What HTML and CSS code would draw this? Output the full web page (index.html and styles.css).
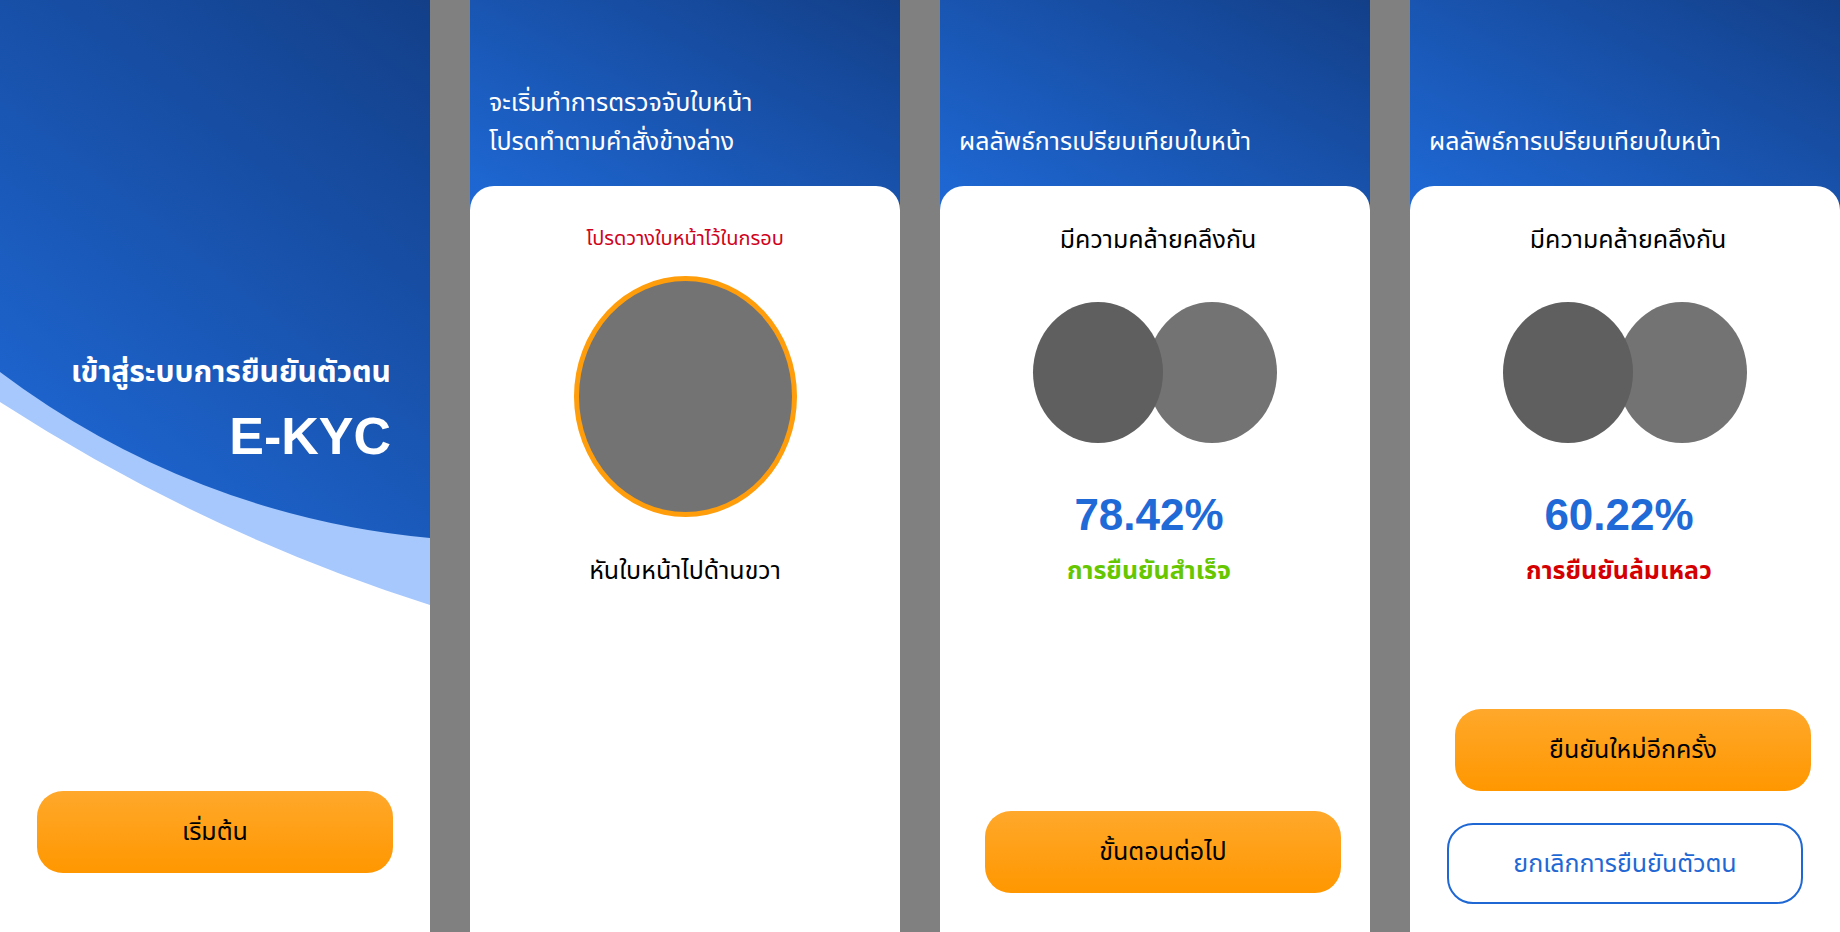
FILE: index.html
```html
<!DOCTYPE html>
<html lang="th">
<head>
<meta charset="utf-8">
<title>E-KYC</title>
<link rel="stylesheet" href="styles.css">
</head>
<body>
<div class="screens">

  <section class="screen screen-welcome">
    <svg class="welcome-bg" viewBox="0 0 430 932" width="430" height="932" aria-hidden="true">
      <defs>
        <linearGradient id="welcomeGrad" gradientUnits="userSpaceOnUse" x1="0" y1="540" x2="430" y2="0">
          <stop offset="0" stop-color="#1f6bdb"/>
          <stop offset="1" stop-color="#133f88"/>
        </linearGradient>
      </defs>
      <path fill="#a6c8fd" d="M0 0H430V605A1800 1800 0 0 1 0 402Z"/>
      <path fill="url(#welcomeGrad)" d="M0 0H430V538A842 842 0 0 1 0 372Z"/>
    </svg>
    <div class="welcome-title">
      <div class="welcome-th">เข้าสู่ระบบการยืนยันตัวตน</div>
      <div class="welcome-en">E-KYC</div>
    </div>
    <button class="btn btn-primary btn-welcome">เริ่มต้น</button>
  </section>

  <section class="screen screen-step">
    <header class="screen-head">
      <p class="head-line">จะเริ่มทำการตรวจจับใบหน้า</p>
      <p class="head-line">โปรดทำตามคำสั่งข้างล่าง</p>
    </header>
    <div class="card">
      <p class="hint-red">โปรดวางใบหน้าไว้ในกรอบ</p>
      <div class="face-frame"></div>
      <p class="instruction">หันใบหน้าไปด้านขวา</p>
    </div>
  </section>

  <section class="screen screen-step">
    <header class="screen-head">
      <p class="head-line">ผลลัพธ์การเปรียบเทียบใบหน้า</p>
    </header>
    <div class="card">
      <p class="similar">มีความคล้ายคลึงกัน</p>
      <div class="faces">
        <div class="face face-a"></div>
        <div class="face face-b"></div>
      </div>
      <p class="score">78.42%</p>
      <p class="status status-ok">การยืนยันสำเร็จ</p>
      <button class="btn btn-primary btn-next">ขั้นตอนต่อไป</button>
    </div>
  </section>

  <section class="screen screen-step">
    <header class="screen-head">
      <p class="head-line">ผลลัพธ์การเปรียบเทียบใบหน้า</p>
    </header>
    <div class="card">
      <p class="similar">มีความคล้ายคลึงกัน</p>
      <div class="faces">
        <div class="face face-a"></div>
        <div class="face face-b"></div>
      </div>
      <p class="score">60.22%</p>
      <p class="status status-fail">การยืนยันล้มเหลว</p>
      <button class="btn btn-primary btn-retry">ยืนยันใหม่อีกครั้ง</button>
      <button class="btn btn-outline">ยกเลิกการยืนยันตัวตน</button>
    </div>
  </section>

</div>
</body>
</html>
```

FILE: styles.css
```css
* { box-sizing: border-box; }

html, body {
  margin: 0;
  padding: 0;
}

body {
  background: #808080;
  font-family: "Noto Sans Thai", "Noto Sans Thai UI", "Noto Sans", "Liberation Sans", sans-serif;
  color: #000;
}

p { margin: 0; }

.screens {
  display: flex;
  gap: 40px;
  width: 1840px;
  height: 932px;
}

.screen {
  position: relative;
  width: 430px;
  height: 932px;
  flex: none;
  overflow: hidden;
  display: flex;
  flex-direction: column;
}

/* ---------- welcome ---------- */
.screen-welcome {
  background: #fff;
}

.welcome-bg {
  position: absolute;
  left: 0;
  top: 0;
  display: block;
}

.welcome-title {
  position: relative;
  padding-top: 352px;
  padding-right: 39px;
  text-align: right;
  color: #fff;
}

.welcome-th {
  font-size: 30px;
  line-height: 42px;
  font-weight: 700;
}

.welcome-en {
  margin-top: 12px;
  font-family: "Liberation Sans", Arial, sans-serif;
  font-size: 52px;
  line-height: 60px;
  font-weight: 700;
}

/* ---------- buttons ---------- */
.btn {
  display: block;
  width: 356px;
  height: 82px;
  border-radius: 26px;
  border: none;
  padding: 0;
  font-family: inherit;
  font-size: 25px;
  cursor: pointer;
}

.btn-primary {
  background: linear-gradient(to bottom, #ffa82b, #ff9700);
  color: #000;
}

.btn-welcome {
  position: relative;
  margin: auto 0 59px 37px;
}

.btn-next {
  margin: auto 0 39px 45px;
}

.btn-retry {
  margin: auto 0 0 45px;
}

.btn-outline {
  margin: 32px 0 28px 37px;
  height: 81px;
  background: #fff;
  border: 2px solid #1f68d4;
  color: #1f68d4;
}

/* ---------- step screens ---------- */
.screen-step {
  background: linear-gradient(to top right, #1f6bda, #133f88) no-repeat;
  background-size: 100% 230px;
  background-color: #fff;
}

.screen-head {
  height: 186px;
  flex: none;
  display: flex;
  flex-direction: column;
  justify-content: flex-end;
  padding: 0 12px 24px 19px;
  color: #fff;
}

.head-line {
  font-size: 25px;
  line-height: 39px;
  white-space: nowrap;
}

.card {
  flex: 1;
  background: #fff;
  border-radius: 24px 24px 0 0;
  display: flex;
  flex-direction: column;
  align-items: center;
}

.hint-red {
  margin-top: 40px;
  font-size: 20px;
  line-height: 26px;
  color: #d0021b;
}

.face-frame {
  margin-top: 24px;
  width: 223px;
  height: 241px;
  border-radius: 50%;
  border: 5px solid #ff9d0a;
  background: #737373;
}

.instruction {
  margin-top: 37px;
  font-size: 25px;
  line-height: 34px;
}

.similar {
  margin-top: 37px;
  margin-left: 6px;
  font-size: 25px;
  line-height: 34px;
}

.faces {
  margin-top: 45px;
  display: flex;
}

.face {
  width: 130px;
  height: 141px;
  border-radius: 50%;
}

.face-a {
  position: relative;
  z-index: 1;
  background: #5f5f5f;
}

.face-b {
  margin-left: -16px;
  background: #737373;
}

.score {
  margin-top: 47px;
  margin-right: 12px;
  font-family: "Liberation Sans", Arial, sans-serif;
  font-size: 44px;
  line-height: 50px;
  font-weight: 700;
  color: #1f6ad6;
}

.status {
  margin-top: 14px;
  margin-right: 12px;
  font-size: 25px;
  line-height: 34px;
  font-weight: 700;
}

.status-ok { color: #66c700; }
.status-fail { color: #d40000; }

.card .btn { align-self: flex-start; }
```
